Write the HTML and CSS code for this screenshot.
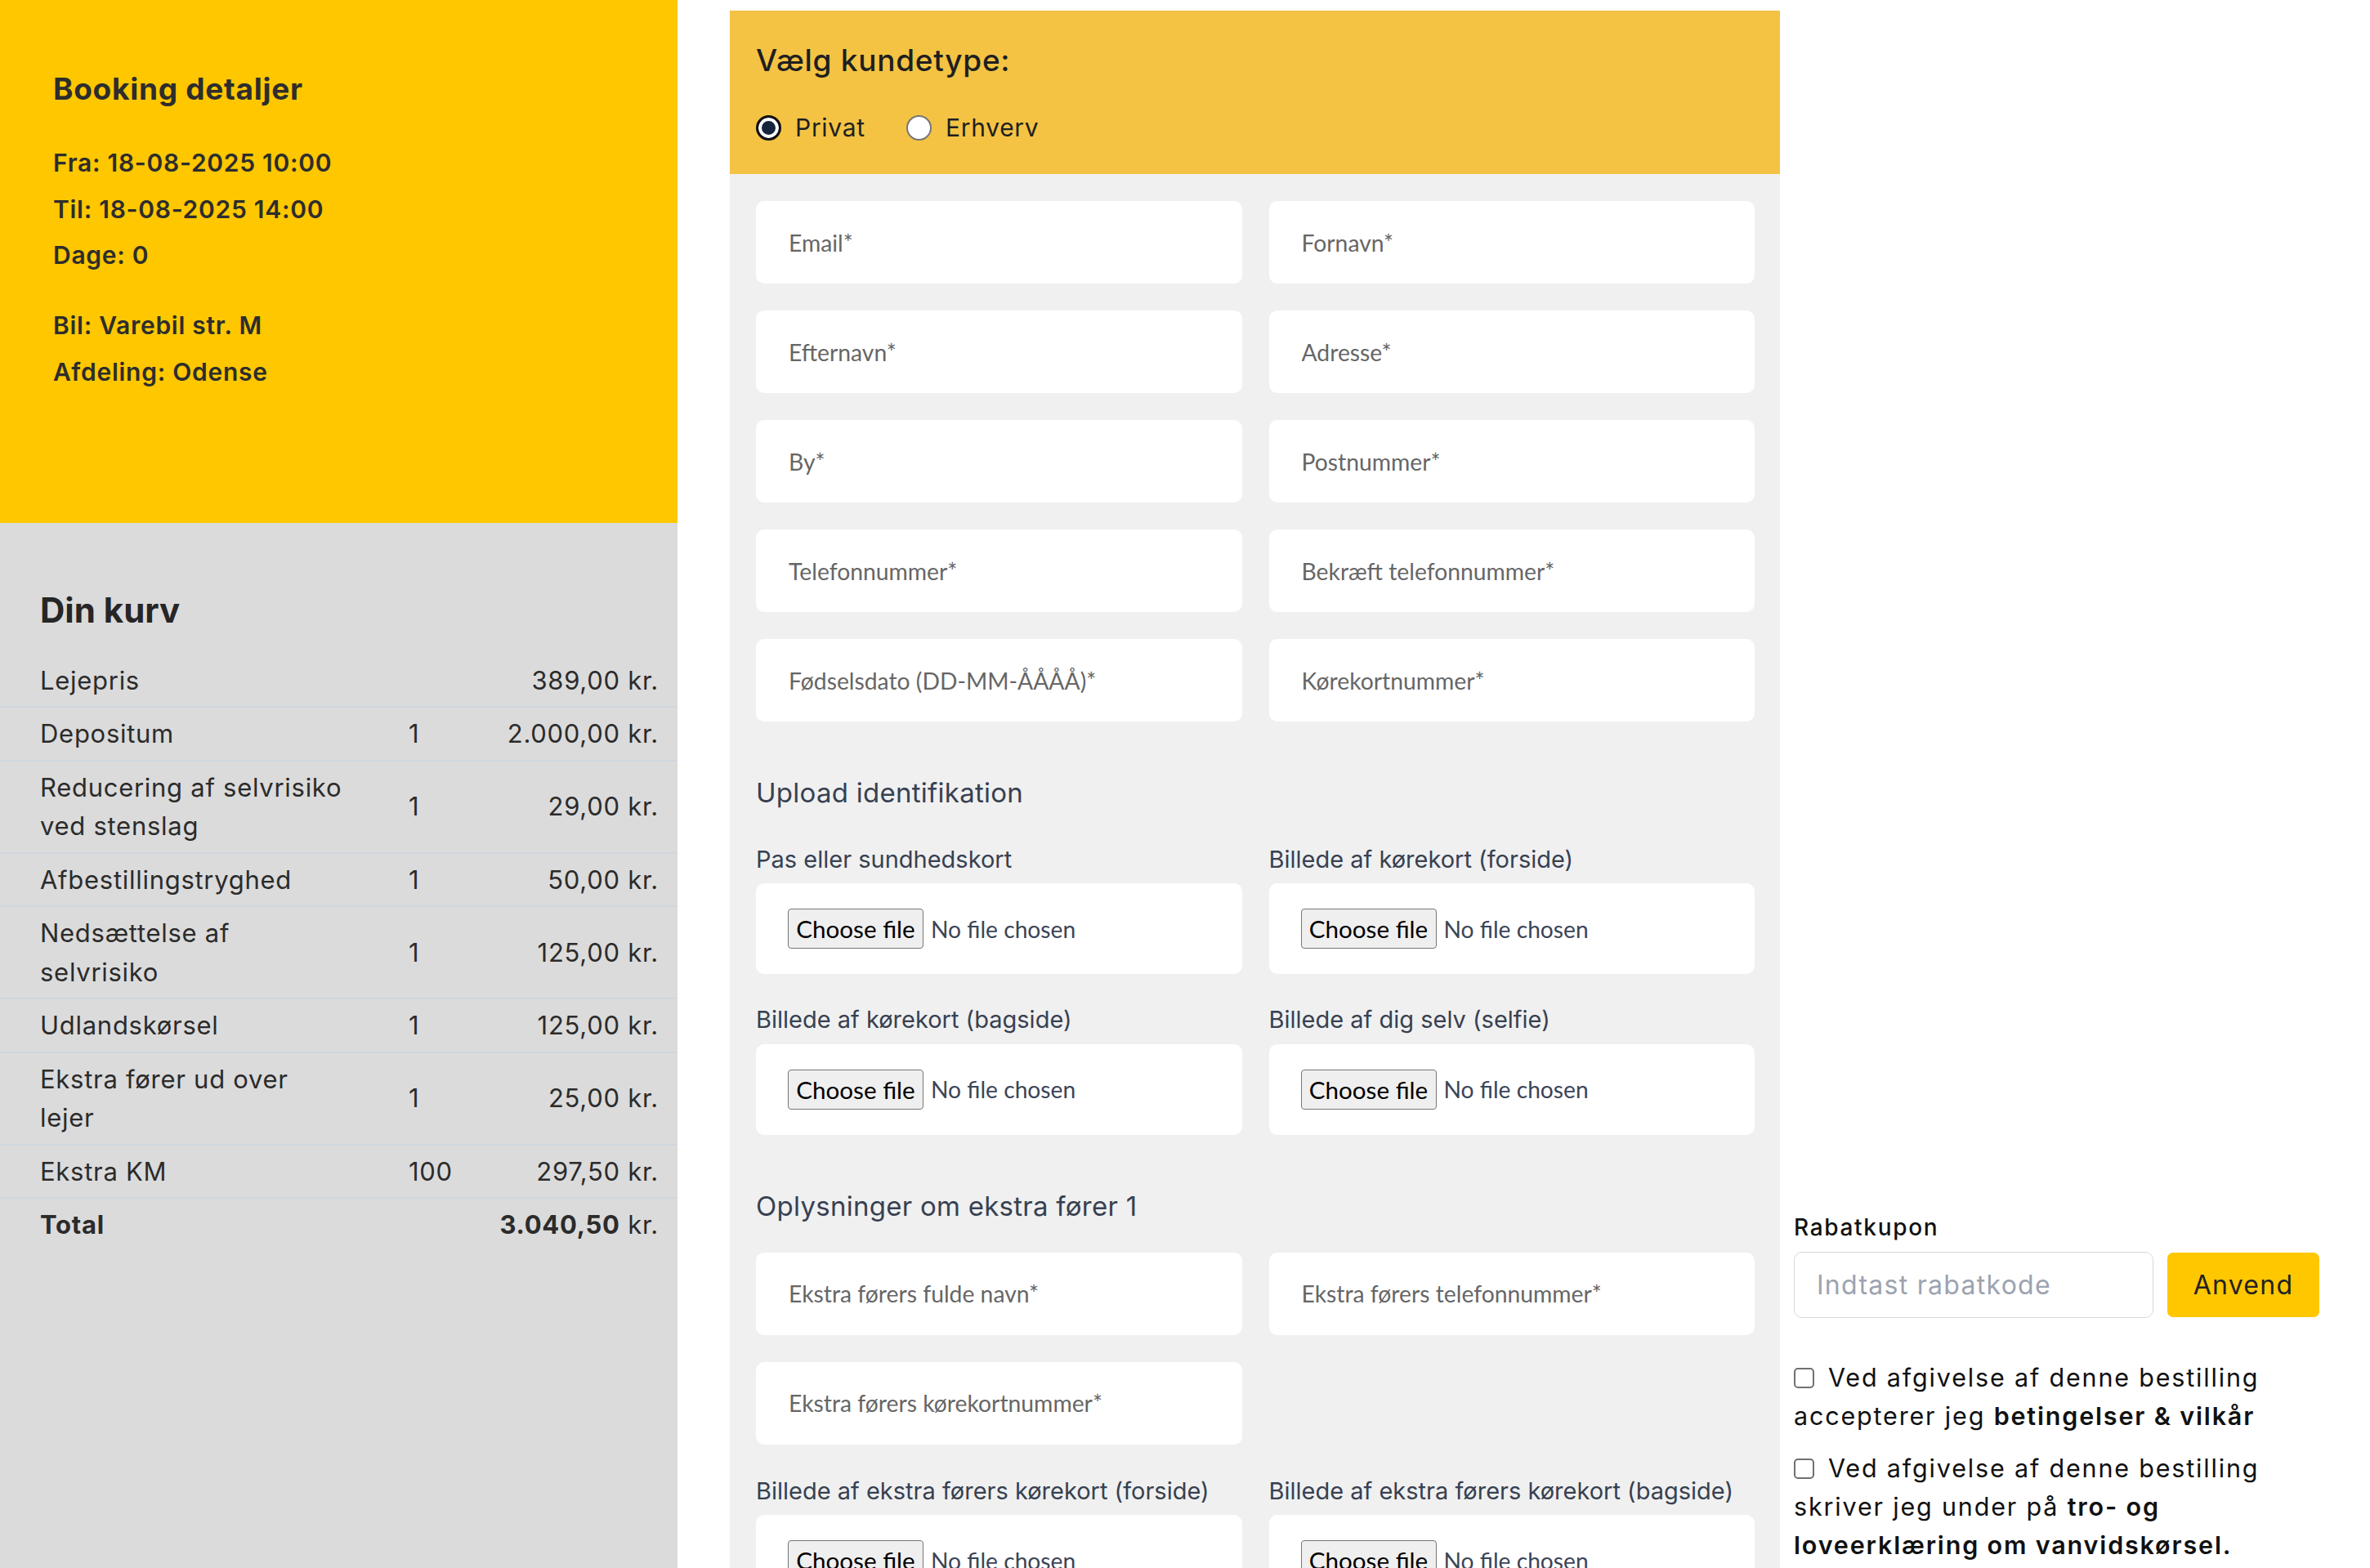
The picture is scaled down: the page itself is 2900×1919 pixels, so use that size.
FILE: index.html
```html
<!DOCTYPE html>
<html lang="da">
<head>
<meta charset="utf-8">
<title>Booking</title>
<link rel="stylesheet" href="styles.css">
</head>
<body>
<div class="page">
  <aside class="summary">
    <section class="booking">
      <h2>Booking detaljer</h2>
      <div class="booking-group">
        <p>Fra: 18-08-2025 10:00</p>
        <p>Til: 18-08-2025 14:00</p>
        <p>Dage: 0</p>
      </div>
      <div class="booking-group">
        <p>Bil: Varebil str. M</p>
        <p>Afdeling: Odense</p>
      </div>
    </section>
    <section class="cart">
      <h2>Din kurv</h2>
      <div class="cart-rows">
        <div class="cart-row"><span>Lejepris</span><span></span><span class="price">389,00 kr.</span></div>
        <div class="cart-row"><span>Depositum</span><span>1</span><span class="price">2.000,00 kr.</span></div>
        <div class="cart-row"><span>Reducering af selvrisiko<br>ved stenslag</span><span>1</span><span class="price">29,00 kr.</span></div>
        <div class="cart-row"><span>Afbestillingstryghed</span><span>1</span><span class="price">50,00 kr.</span></div>
        <div class="cart-row"><span>Nedsættelse af<br>selvrisiko</span><span>1</span><span class="price">125,00 kr.</span></div>
        <div class="cart-row"><span>Udlandskørsel</span><span>1</span><span class="price">125,00 kr.</span></div>
        <div class="cart-row"><span>Ekstra fører ud over<br>lejer</span><span>1</span><span class="price">25,00 kr.</span></div>
        <div class="cart-row"><span>Ekstra KM</span><span>100</span><span class="price">297,50 kr.</span></div>
        <div class="cart-row total"><strong>Total</strong><span></span><span class="price"><strong>3.040,50</strong> kr.</span></div>
      </div>
    </section>
  </aside>

  <main class="checkout">
    <div class="customer-type">
      <h2>Vælg kundetype:</h2>
      <div class="radios">
        <label class="radio"><input type="radio" name="kundetype" checked><span>Privat</span></label>
        <label class="radio"><input type="radio" name="kundetype"><span>Erhverv</span></label>
      </div>
    </div>

    <div class="form-body">
      <div class="field-grid">
        <input class="field" type="email" placeholder="Email*">
        <input class="field" type="text" placeholder="Fornavn*">
        <input class="field" type="text" placeholder="Efternavn*">
        <input class="field" type="text" placeholder="Adresse*">
        <input class="field" type="text" placeholder="By*">
        <input class="field" type="text" placeholder="Postnummer*">
        <input class="field" type="tel" placeholder="Telefonnummer*">
        <input class="field" type="tel" placeholder="Bekræft telefonnummer*">
        <input class="field" type="text" placeholder="Fødselsdato (DD-MM-ÅÅÅÅ)*">
        <input class="field" type="text" placeholder="Kørekortnummer*">
      </div>

      <h3 class="section-title">Upload identifikation</h3>
      <div class="upload-grid">
        <div class="upload">
          <span class="upload-label">Pas eller sundhedskort</span>
          <label class="file-box"><span class="file-btn">Choose file</span><span class="file-name">No file chosen</span><input type="file" hidden></label>
        </div>
        <div class="upload">
          <span class="upload-label">Billede af kørekort (forside)</span>
          <label class="file-box"><span class="file-btn">Choose file</span><span class="file-name">No file chosen</span><input type="file" hidden></label>
        </div>
        <div class="upload">
          <span class="upload-label">Billede af kørekort (bagside)</span>
          <label class="file-box"><span class="file-btn">Choose file</span><span class="file-name">No file chosen</span><input type="file" hidden></label>
        </div>
        <div class="upload">
          <span class="upload-label">Billede af dig selv (selfie)</span>
          <label class="file-box"><span class="file-btn">Choose file</span><span class="file-name">No file chosen</span><input type="file" hidden></label>
        </div>
      </div>

      <h3 class="section-title">Oplysninger om ekstra fører 1</h3>
      <div class="field-grid">
        <input class="field" type="text" placeholder="Ekstra førers fulde navn*">
        <input class="field" type="tel" placeholder="Ekstra førers telefonnummer*">
        <input class="field" type="text" placeholder="Ekstra førers kørekortnummer*">
      </div>
      <div class="upload-grid">
        <div class="upload">
          <span class="upload-label">Billede af ekstra førers kørekort (forside)</span>
          <label class="file-box"><span class="file-btn">Choose file</span><span class="file-name">No file chosen</span><input type="file" hidden></label>
        </div>
        <div class="upload">
          <span class="upload-label">Billede af ekstra førers kørekort (bagside)</span>
          <label class="file-box"><span class="file-btn">Choose file</span><span class="file-name">No file chosen</span><input type="file" hidden></label>
        </div>
      </div>
    </div>
  </main>

  <aside class="order">
    <label class="coupon-label" for="coupon">Rabatkupon</label>
    <div class="coupon">
      <input id="coupon" class="coupon-input" type="text" placeholder="Indtast rabatkode">
      <button class="coupon-btn" type="button">Anvend</button>
    </div>
    <label class="consent"><input type="checkbox">Ved afgivelse af denne bestilling<br>accepterer jeg <strong>betingelser &amp; vilkår</strong></label>
    <label class="consent"><input type="checkbox">Ved afgivelse af denne bestilling<br>skriver jeg under på <strong>tro- og<br>loveerklæring om vanvidskørsel.</strong></label>
  </aside>
</div>
</body>
</html>
```

FILE: styles.css
```css
* {
  box-sizing: border-box;
}

html,
body {
  margin: 0;
  padding: 0;
}

body {
  font-family: Inter, "Noto Sans", sans-serif;
  letter-spacing: 0.045em;
  color: #2b2b2b;
  background: #ffffff;
}

.page {
  display: flex;
  align-items: stretch;
  min-height: 1919px;
}

/* ---------- Left summary ---------- */
.summary {
  flex: none;
  width: 829px;
  background: #dbdbdb;
  display: flex;
  flex-direction: column;
}

.booking {
  height: 640px;
  background: #ffc700;
  padding: 87px 65px 0;
  color: #2d2d2d;
}

.booking h2 {
  margin: 0 0 40px;
  font-size: 37px;
  line-height: 44px;
  font-weight: 700;
}

.booking-group p {
  margin: 0;
  font-size: 30px;
  line-height: 56.5px;
  font-weight: 600;
}

.booking-group + .booking-group {
  margin-top: 29.5px;
}

.cart {
  padding-top: 79.5px;
}

.cart h2 {
  margin: 0 0 28px 49px;
  font-size: 42px;
  line-height: 53px;
  font-weight: 700;
  letter-spacing: 0;
  color: #262626;
}

.cart-row {
  display: grid;
  grid-template-columns: 451px 110px 1fr;
  align-items: center;
  padding: 8px 23px 8px 49px;
  font-size: 31px;
  line-height: 47.5px;
  color: #2b2b2b;
}

.cart-row + .cart-row {
  border-top: 2px solid #d0d6df;
}

.cart-row .price {
  text-align: right;
  white-space: nowrap;
}

.cart-row strong {
  font-weight: 700;
}

/* ---------- Checkout form ---------- */
.checkout {
  flex: none;
  width: 1285px;
  margin: 13px 0 0 64px;
  background: #f0f0f0;
}

.customer-type {
  height: 200px;
  background: #f4c344;
  padding: 38.5px 32px 0;
  color: #1f1f1f;
}

.customer-type h2 {
  margin: 0;
  font-size: 37px;
  line-height: 44px;
  font-weight: 500;
}

.radios {
  display: flex;
  align-items: center;
  gap: 50px;
  margin-top: 38px;
  font-size: 30px;
  line-height: 45px;
}

.radio {
  display: inline-flex;
  align-items: center;
  gap: 17px;
}

.radio input {
  appearance: none;
  -webkit-appearance: none;
  margin: 0;
  width: 31px;
  height: 31px;
  border: 2px solid #767676;
  border-radius: 50%;
  background: #ffffff;
}

.radio input:checked {
  border: 3px solid #111111;
  background: #14263b;
  box-shadow: inset 0 0 0 4px #ffffff;
}

.form-body {
  display: flex;
  flex-direction: column;
  padding: 33px 31px 80px 32px;
}

.field-grid {
  display: grid;
  grid-template-columns: minmax(0, 1fr) minmax(0, 1fr);
  gap: 33px;
}

.field {
  width: 100%;
  height: 101px;
  border: none;
  border-radius: 10px;
  background: #ffffff;
  padding: 0 40px;
  font-family: Lato, "Noto Sans", sans-serif;
  font-size: 28.3px;
  letter-spacing: 0;
  color: #333333;
  outline: none;
}

.field::placeholder {
  color: #666666;
}

.section-title {
  margin: 62px 0 32px;
  font-size: 33px;
  line-height: 50px;
  font-weight: 400;
  letter-spacing: 0.008em;
  color: #374151;
}

.upload-grid {
  display: grid;
  grid-template-columns: minmax(0, 1fr) minmax(0, 1fr);
  column-gap: 33px;
  row-gap: 34px;
}

.section-title + .upload-grid {
  margin-top: 3px;
}

.field-grid + .upload-grid {
  margin-top: 35px;
}

.upload-label {
  display: block;
  margin-bottom: 7px;
  font-size: 29px;
  line-height: 44.4px;
  letter-spacing: 0;
  color: #374151;
  white-space: nowrap;
}

.file-box {
  display: flex;
  align-items: center;
  height: 111px;
  padding: 0 39px;
  border-radius: 10px;
  background: #ffffff;
}

.file-btn {
  display: inline-flex;
  align-items: center;
  justify-content: center;
  width: 166px;
  height: 49px;
  border: 1.5px solid #767676;
  border-radius: 4px;
  background: #efefef;
  font-family: Lato, "Noto Sans", sans-serif;
  font-size: 29.6px;
  letter-spacing: 0;
  color: #000000;
}

.file-name {
  margin-left: 9px;
  font-family: Lato, "Noto Sans", sans-serif;
  font-size: 28.2px;
  letter-spacing: 0;
  color: #3b4556;
}

/* ---------- Right column ---------- */
.order {
  flex: 1;
  padding: 1483px 17px 0;
  color: #111111;
}

.coupon-label {
  display: block;
  margin-bottom: 10px;
  font-size: 28px;
  line-height: 39px;
  font-weight: 500;
  letter-spacing: 0.06em;
}

.coupon {
  display: flex;
  align-items: center;
  gap: 17px;
}

.coupon-input {
  width: 440px;
  height: 81px;
  border: 1.5px solid #d5d8de;
  border-radius: 10px;
  padding: 0 27px;
  font-family: Inter, "Noto Sans", sans-serif;
  font-size: 32px;
  letter-spacing: 0.04em;
  color: #222222;
  background: #ffffff;
}

.coupon-input::placeholder {
  color: #9ca3af;
}

.coupon-btn {
  width: 186px;
  height: 79px;
  border: none;
  border-radius: 7px;
  background: #ffc700;
  font-family: Inter, "Noto Sans", sans-serif;
  font-size: 32px;
  letter-spacing: 0.04em;
  color: #222222;
}

.consent {
  display: block;
  margin-top: 50px;
  font-size: 30.5px;
  line-height: 46.7px;
  letter-spacing: 0.06em;
  color: #111111;
}

.consent + .consent {
  margin-top: 18px;
}

.consent strong {
  font-weight: 600;
}

.consent input {
  appearance: none;
  -webkit-appearance: none;
  width: 25px;
  height: 25px;
  margin: 0 17px 0 0;
  border: 2px solid #707070;
  border-radius: 5px;
  background: #ffffff;
  vertical-align: -2px;
}
```
